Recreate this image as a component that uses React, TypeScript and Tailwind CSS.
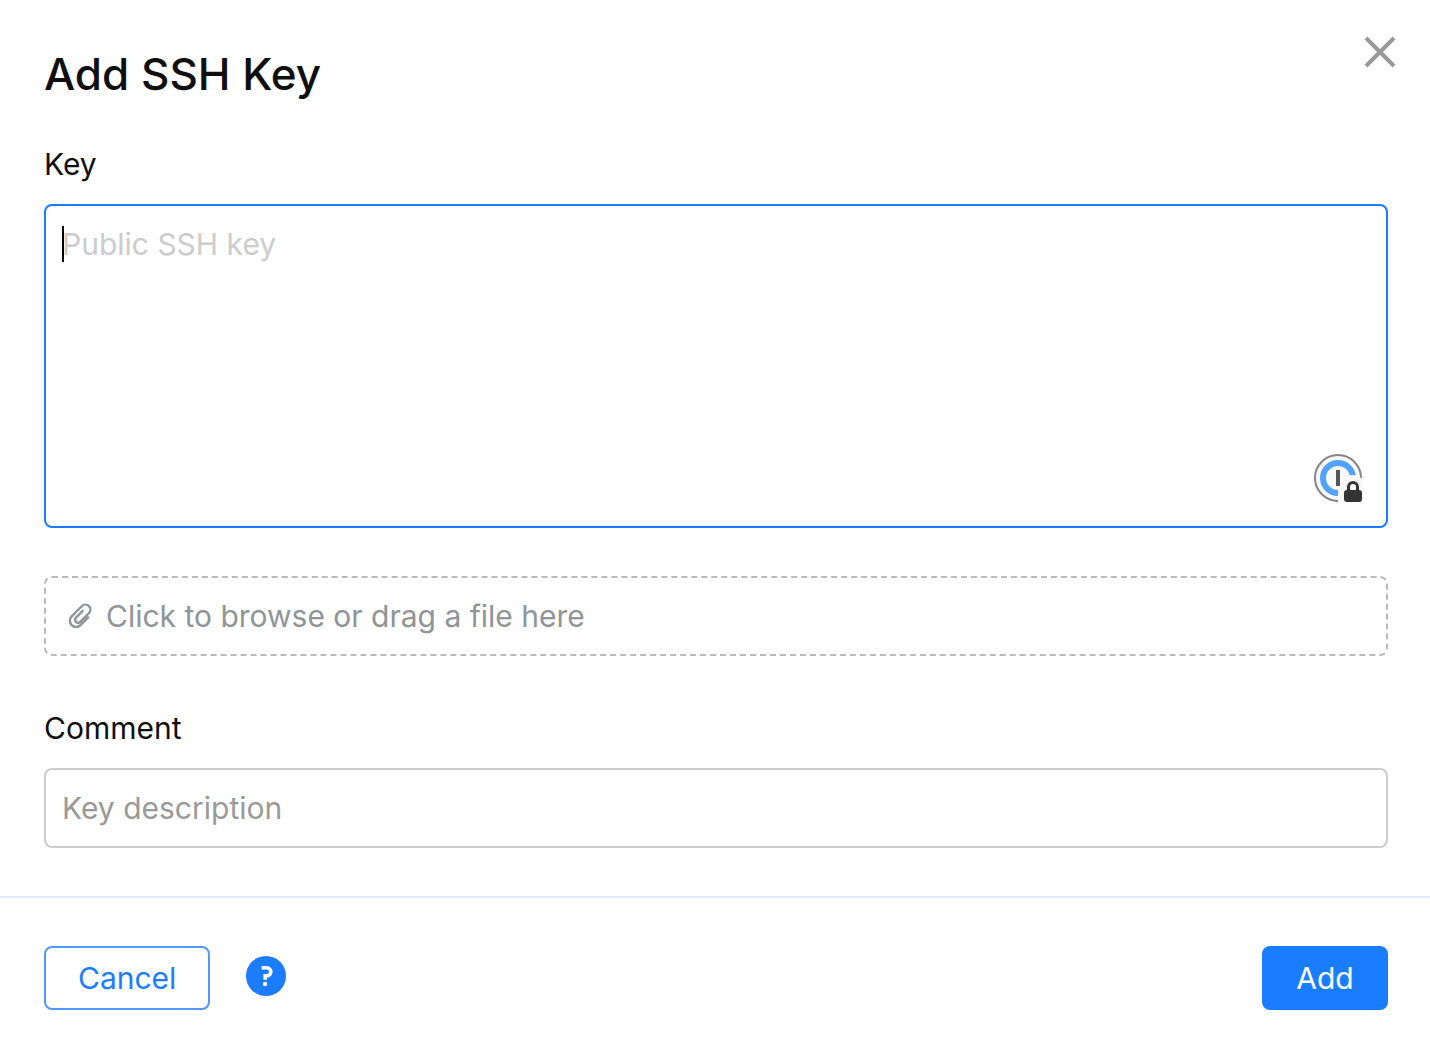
import React, { useState } from 'react';

function CloseIcon() {
    return (
        <svg viewBox="0 0 40 40" className="size-10" fill="none" stroke="#999" strokeWidth="4">
            <path d="M6 6 34 34M34 6 6 34" />
        </svg>
    );
}

function PaperclipIcon() {
    return (
        <svg viewBox="-1 0 28 28" className="size-7" fill="none" stroke="currentColor" strokeWidth="2.4" strokeLinecap="round">
            <path d="M21.2 15.4 13.5 23.1A6.2 6.2 0 0 1 4.7 14.3L15 4A4.95 4.95 0 0 1 22 11L13.2 19.8A3 3 0 0 1 8.95 15.55L15.7 8.8" />
        </svg>
    );
}

function PasswordManagerIcon() {
    return (
        <svg viewBox="0 0 48 48" className="size-12">
            <circle cx="24" cy="24" r="23" fill="#f8f8f8" stroke="#858585" strokeWidth="2" />
            <circle cx="24" cy="24" r="15" fill="none" stroke="#52a2ff" strokeWidth="6" />
            <rect x="22" y="16" width="4" height="16" fill="#555" />
            <path d="M24 48V36q0-3 3-4 1-11 12-11 6 0 9 4v23Z" fill="#f8f8f8" />
            <rect x="30" y="36" width="18" height="12" rx="3" fill="#333" />
            <path d="M34.5 37v-4a4.5 4.5 0 0 1 9 0v4" fill="none" stroke="#333" strokeWidth="3" />
        </svg>
    );
}

function HelpIcon() {
    return (
        <svg viewBox="0 0 40 40" className="size-10">
            <circle cx="20" cy="20" r="20" fill="#1a7dff" />
            <path d="M15.6 11.8h5.2a4 4 0 0 1 0 8h-1.6v4" fill="none" stroke="#fff" strokeWidth="3.6" />
            <circle cx="19" cy="28" r="2.2" fill="#fff" />
        </svg>
    );
}

export default function App() {
    const [key, setKey] = useState('');
    const [comment, setComment] = useState('');

    return (
        <form
            className="flex flex-col bg-white font-['Inter',sans-serif] text-[30px] leading-9 text-[#0f0f0f]"
            onSubmit={(e) => e.preventDefault()}
        >
            <header className="flex items-start justify-between pt-8 pr-[30px] pl-11">
                <h1 className="pt-3 text-[44px] leading-[60px] font-medium">Add SSH Key</h1>
                <button type="button" aria-label="Close">
                    <CloseIcon />
                </button>
            </header>

            <div className="flex flex-col pt-[42px] pr-[42px] pb-12 pl-11">
                <label htmlFor="key">Key</label>
                <div className="relative mt-[22px] flex">
                    <textarea
                        id="key"
                        value={key}
                        onChange={(e) => setKey(e.target.value)}
                        placeholder="Public SSH key"
                        className="h-[324px] w-full resize-none rounded-lg border-2 border-[#1a7dff] px-4 py-5 outline-none placeholder:text-[#ccc]"
                    />
                    {!key && <span className="absolute top-[22px] left-[18px] h-9 w-0.5 bg-black" />}
                    <button type="button" aria-label="Unlock password manager" className="absolute right-[26px] bottom-[26px]">
                        <PasswordManagerIcon />
                    </button>
                </div>

                <button
                    type="button"
                    className="mt-12 flex h-20 items-center gap-3 rounded-lg border-2 border-dashed border-[#bbb] px-5 text-[#8f9497]"
                >
                    <PaperclipIcon />
                    Click to browse or drag a file here
                </button>

                <label htmlFor="comment" className="mt-[54px]">Comment</label>
                <input
                    id="comment"
                    type="text"
                    value={comment}
                    onChange={(e) => setComment(e.target.value)}
                    placeholder="Key description"
                    className="mt-[22px] h-20 rounded-lg border-2 border-[#ccc] px-4 outline-none placeholder:text-[#999]"
                />
            </div>

            <footer className="flex items-center border-t-2 border-[#e0ebff] pt-12 pr-[42px] pb-11 pl-11">
                <button type="button" className="h-16 rounded-lg border-2 border-[#5299ff] px-8 text-[#1a7dff]">
                    Cancel
                </button>
                <button type="button" aria-label="Help" className="mb-1 ml-9">
                    <HelpIcon />
                </button>
                <button type="submit" className="ml-auto h-16 w-[126px] rounded-lg bg-[#1a7dff] text-white">
                    Add
                </button>
            </footer>
        </form>
    );
}
